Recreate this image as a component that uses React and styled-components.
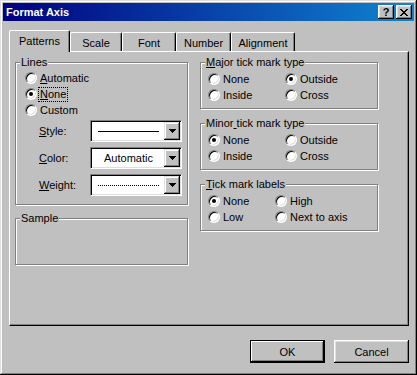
import React from 'react';
import styled, { createGlobalStyle } from 'styled-components';

const FACE = '#c0c0c0';
const FONT = '"Liberation Sans", Arial, sans-serif';

const Global = createGlobalStyle`
  html, body { margin: 0; padding: 0; background: ${FACE}; }
  body { font-family: ${FONT}; font-size: 11px; color: #000; }
`;

const Window = styled.div`
  box-sizing: border-box;
  width: 417px;
  height: 375px;
  background: ${FACE};
  padding: 3px;
  display: flex;
  flex-direction: column;
  box-shadow: inset -1px -1px 0 #000, inset 1px 1px 0 #dfdfdf,
    inset -2px -2px 0 #808080, inset 2px 2px 0 #fff;
`;

const TitleBar = styled.div`
  flex: none;
  height: 18px;
  display: flex;
  align-items: center;
  padding: 0 2px 0 3px;
  background: linear-gradient(to right, #000080, #1084d0);
  color: #fff;
`;

const Title = styled.div`
  flex: 1;
  font-weight: bold;
  font-size: 11px;
  line-height: 13px;
  white-space: nowrap;
`;

const CaptionButton = styled.div`
  box-sizing: border-box;
  width: 16px;
  height: 14px;
  margin-left: ${(p) => p.$gap || 0}px;
  background: ${FACE};
  color: #000;
  display: flex;
  align-items: center;
  justify-content: center;
  font: bold 11px ${FONT};
  line-height: 12px;
  box-shadow: inset -1px -1px 0 #000, inset 1px 1px 0 #fff,
    inset -2px -2px 0 #808080, inset 2px 2px 0 #dfdfdf;
`;

const Body = styled.div`
  flex: 1;
  display: flex;
  flex-direction: column;
  padding: 9px 5px 0 6px;
`;

const TabStrip = styled.div`
  display: flex;
  align-items: flex-end;
  height: 21px;
`;

const Tab = styled.div`
  box-sizing: border-box;
  position: relative;
  z-index: ${(p) => (p.$active ? 1 : 0)};
  width: ${(p) => p.$w}px;
  height: ${(p) => (p.$active ? 22 : 19)}px;
  margin-bottom: ${(p) => (p.$active ? -1 : 0)}px;
  padding-top: ${(p) => (p.$active ? 0 : 2)}px;
  background: ${FACE};
  border-left: 1px solid #fff;
  border-top: 1px solid #fff;
  border-right: 1px solid #000;
  border-radius: 2px 2px 0 0;
  box-shadow: inset -1px 0 0 #808080;
  display: flex;
  align-items: center;
  justify-content: center;
  line-height: 13px;
  white-space: nowrap;
`;

const Panel = styled.div`
  box-sizing: border-box;
  height: 275px;
  border: 1px solid;
  border-color: #fff #000 #000 #fff;
  box-shadow: inset -1px -1px 0 #808080;
  padding: 4px 0 0 5px;
  display: grid;
  grid-template-columns: 173px 178px;
  column-gap: 12px;
  align-items: start;
`;

const Column = styled.div`
  display: flex;
  flex-direction: column;
  gap: ${(p) => p.$gap}px;
`;

const GroupBox = styled.fieldset`
  box-sizing: border-box;
  margin: 0;
  min-width: 0;
  height: ${(p) => p.$h}px;
  padding: 0 0 0 4px;
  border: 1px solid #808080;
  box-shadow: inset 1px 1px 0 #fff, 1px 1px 0 #fff;
`;

const Legend = styled.legend`
  padding: 0 1px;
  font-size: 11px;
  line-height: 13px;
  background: ${FACE};
`;

const U = styled.span`
  text-decoration: underline;
  text-underline-offset: 1px;
`;

const RadioGrid = styled.div`
  display: grid;
  grid-template-columns: ${(p) => (p.$col ? `${p.$col}px auto` : 'auto')};
  grid-auto-rows: 16px;
  padding: ${(p) => p.$top}px 0 0 ${(p) => p.$indent}px;
`;

const Option = styled.label`
  display: flex;
  align-items: center;
  gap: 2px;
  height: 16px;
  white-space: nowrap;
`;

const RadioCircle = styled.span`
  position: relative;
  flex: none;
  box-sizing: border-box;
  width: 12px;
  height: 12px;
  border-radius: 50%;
  background: #fff;
  border: 1px solid;
  border-color: #808080 #fff #fff #808080;
  box-shadow: inset 1px 1px 0 #000, inset -1px -1px 0 #dfdfdf;
  &::after {
    content: '';
    display: ${(p) => (p.$checked ? 'block' : 'none')};
    position: absolute;
    left: 3px;
    top: 3px;
    width: 4px;
    height: 4px;
    border-radius: 50%;
    background: #000;
  }
`;

const OptionText = styled.span`
  padding: 0 1px;
  line-height: 13px;
  outline: ${(p) => (p.$focused ? '1px dotted #000' : 'none')};
`;

const ComboGrid = styled.div`
  display: grid;
  grid-template-columns: 51px 92px;
  grid-auto-rows: 22px;
  row-gap: 5px;
  align-items: center;
  margin: 2px 0 0 19px;
`;

const FieldLabel = styled.span`
  line-height: 13px;
`;

const Combo = styled.div`
  box-sizing: border-box;
  width: 92px;
  height: 22px;
  padding: 2px;
  display: flex;
  background: #fff;
  border: 1px solid;
  border-color: #808080 #fff #fff #808080;
  box-shadow: inset 1px 1px 0 #000, inset -1px -1px 0 #dfdfdf;
`;

const ComboField = styled.div`
  flex: 1;
  display: flex;
  align-items: center;
  justify-content: center;
  line-height: 13px;
`;

const SampleLine = styled.div`
  width: 61px;
  height: 0;
  border-top: 1px ${(p) => p.$style} #000;
`;

const DropButton = styled.div`
  box-sizing: border-box;
  flex: none;
  width: 16px;
  height: 18px;
  margin: -1px -1px -1px 0;
  background: ${FACE};
  display: flex;
  align-items: center;
  justify-content: center;
  box-shadow: inset -1px -1px 0 #000, inset 1px 1px 0 #dfdfdf,
    inset -2px -2px 0 #808080, inset 2px 2px 0 #fff;
`;

const ButtonRow = styled.div`
  display: flex;
  justify-content: flex-end;
  gap: 9px;
  margin-top: 14px;
`;

const PushButton = styled.button`
  box-sizing: border-box;
  width: 75px;
  height: 23px;
  margin: 0;
  padding: 0;
  font: 11px ${FONT};
  color: #000;
  background: ${FACE};
  border: ${(p) => (p.$default ? '1px solid #000' : 'none')};
  box-shadow: ${(p) =>
    p.$default
      ? 'inset -1px -1px 0 #000, inset 1px 1px 0 #fff, inset -2px -2px 0 #808080'
      : 'inset -1px -1px 0 #000, inset 1px 1px 0 #fff, inset -2px -2px 0 #808080, inset 2px 2px 0 #dfdfdf'};
`;

const Arrow = () => (
  <svg width="7" height="4" viewBox="0 0 7 4" shapeRendering="crispEdges">
    <rect x="0" y="0" width="7" height="1" fill="#000" />
    <rect x="1" y="1" width="5" height="1" fill="#000" />
    <rect x="2" y="2" width="3" height="1" fill="#000" />
    <rect x="3" y="3" width="1" height="1" fill="#000" />
  </svg>
);

const CloseGlyph = () => (
  <svg width="8" height="7" viewBox="0 0 8 7" shapeRendering="crispEdges">
    {[
      [0, 0], [6, 0], [1, 1], [5, 1], [2, 2], [4, 2], [3, 3], [2, 4], [4, 4], [1, 5], [5, 5], [0, 6], [6, 6],
    ].map(([x, y]) => (
      <rect key={`${x}-${y}`} x={x} y={y} width="2" height="1" fill="#000" />
    ))}
  </svg>
);

const Radio = ({ checked, focused, children }) => (
  <Option>
    <RadioCircle $checked={checked} />
    <OptionText $focused={focused}>{children}</OptionText>
  </Option>
);

const ComboBox = ({ children }) => (
  <Combo>
    <ComboField>{children}</ComboField>
    <DropButton>
      <Arrow />
    </DropButton>
  </Combo>
);

const tabs = [
  { label: 'Patterns', w: 61, active: true },
  { label: 'Scale', w: 52 },
  { label: 'Font', w: 54 },
  { label: 'Number', w: 55 },
  { label: 'Alignment', w: 64 },
];

export default function App() {
  return (
    <>
      <Global />
      <Window>
        <TitleBar>
          <Title>Format Axis</Title>
          <CaptionButton>?</CaptionButton>
          <CaptionButton $gap={2}>
            <CloseGlyph />
          </CaptionButton>
        </TitleBar>
        <Body>
          <TabStrip>
            {tabs.map((t) => (
              <Tab key={t.label} $w={t.w} $active={t.active}>
                {t.label}
              </Tab>
            ))}
          </TabStrip>
          <Panel>
            <Column $gap={7}>
              <GroupBox $h={149}>
                <Legend>Lines</Legend>
                <RadioGrid $top={1} $indent={5}>
                  <Radio>
                    <U>A</U>utomatic
                  </Radio>
                  <Radio checked focused>
                    <U>N</U>one
                  </Radio>
                  <Radio>Custom</Radio>
                </RadioGrid>
                <ComboGrid>
                  <FieldLabel>
                    <U>S</U>tyle:
                  </FieldLabel>
                  <ComboBox>
                    <SampleLine $style="solid" />
                  </ComboBox>
                  <FieldLabel>
                    <U>C</U>olor:
                  </FieldLabel>
                  <ComboBox>Automatic</ComboBox>
                  <FieldLabel>
                    <U>W</U>eight:
                  </FieldLabel>
                  <ComboBox>
                    <SampleLine $style="dotted" />
                  </ComboBox>
                </ComboGrid>
              </GroupBox>
              <GroupBox $h={53}>
                <Legend>Sample</Legend>
              </GroupBox>
            </Column>
            <Column $gap={8}>
              <GroupBox $h={53}>
                <Legend>
                  <U>M</U>ajor tick mark type
                </Legend>
                <RadioGrid $col={77} $top={2} $indent={3}>
                  <Radio>None</Radio>
                  <Radio checked>Outside</Radio>
                  <Radio>Inside</Radio>
                  <Radio>Cross</Radio>
                </RadioGrid>
              </GroupBox>
              <GroupBox $h={53}>
                <Legend>
                  Minor<U> </U>tick mark type
                </Legend>
                <RadioGrid $col={77} $top={2} $indent={3}>
                  <Radio checked>None</Radio>
                  <Radio>Outside</Radio>
                  <Radio>Inside</Radio>
                  <Radio>Cross</Radio>
                </RadioGrid>
              </GroupBox>
              <GroupBox $h={53}>
                <Legend>
                  <U>T</U>ick mark labels
                </Legend>
                <RadioGrid $col={67} $top={2} $indent={3}>
                  <Radio checked>None</Radio>
                  <Radio>High</Radio>
                  <Radio>Low</Radio>
                  <Radio>Next to axis</Radio>
                </RadioGrid>
              </GroupBox>
            </Column>
          </Panel>
          <ButtonRow>
            <PushButton $default>OK</PushButton>
            <PushButton>Cancel</PushButton>
          </ButtonRow>
        </Body>
      </Window>
    </>
  );
}
